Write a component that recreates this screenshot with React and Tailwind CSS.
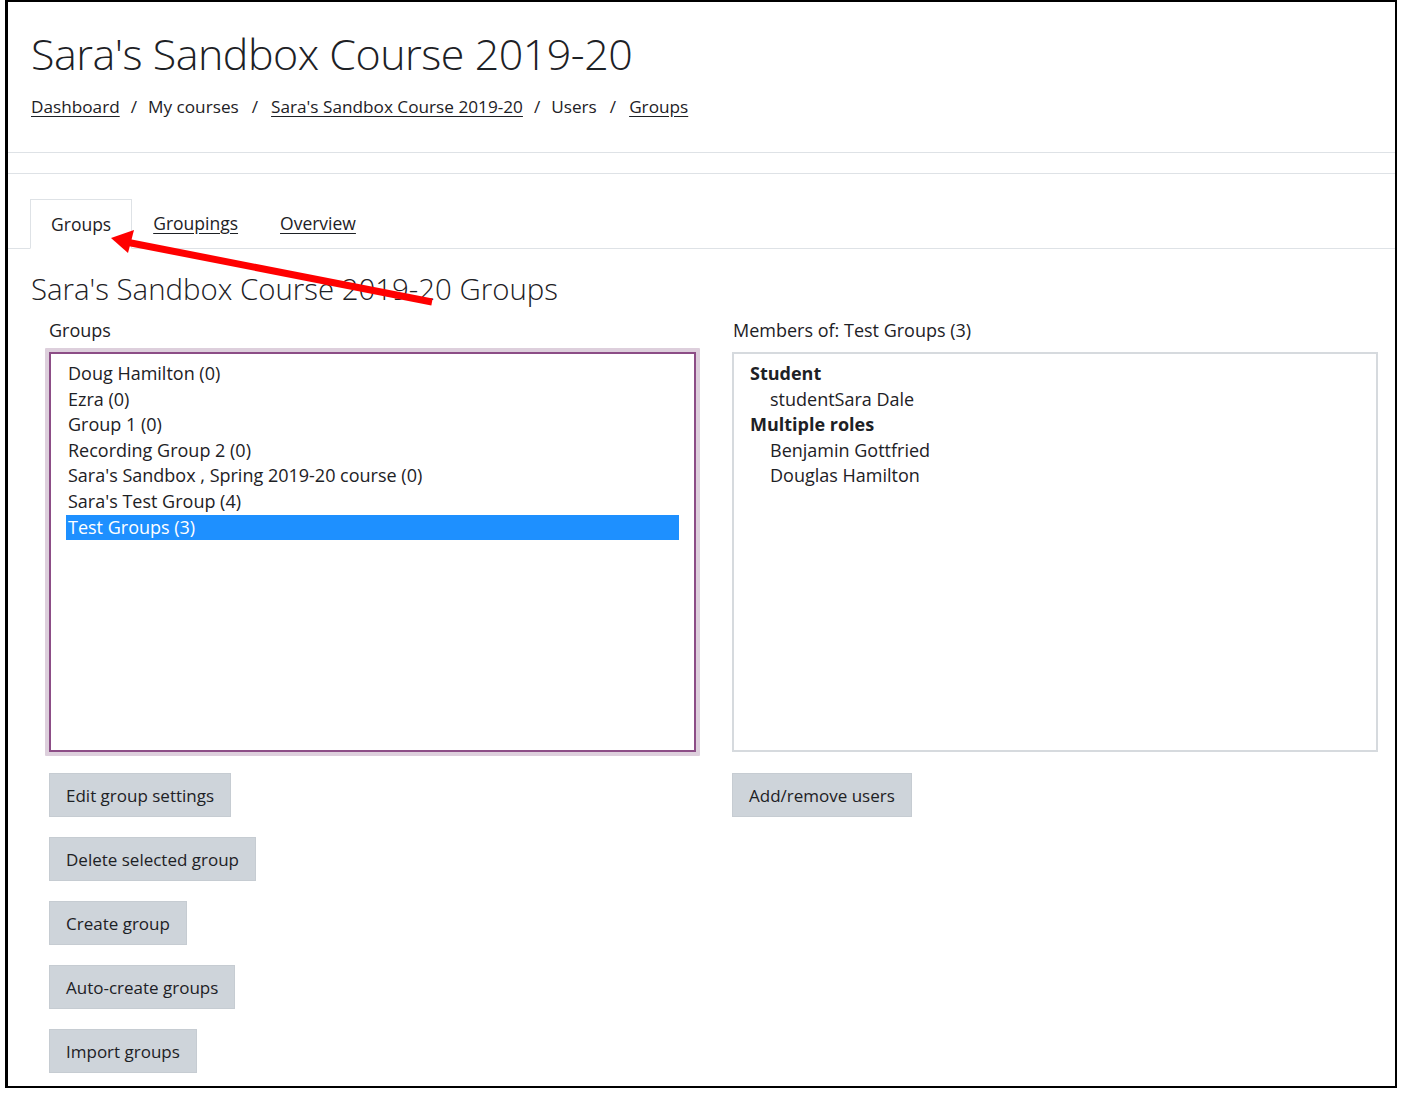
const groups = [
  'Doug Hamilton (0)',
  'Ezra (0)',
  'Group 1 (0)',
  'Recording Group 2 (0)',
  "Sara's Sandbox , Spring 2019-20 course (0)",
  "Sara's Test Group (4)",
  'Test Groups (3)'
];

const leftButtons = [
  'Edit group settings',
  'Delete selected group',
  'Create group',
  'Auto-create groups',
  'Import groups'
];

function Btn({ children }) {
  return (
    <button className="h-[44px] px-[16px] bg-[#ced4da] border border-[#c6ccd2] text-[17px] text-[#1d2125] leading-none self-start">
      {children}
    </button>
  );
}

function Crumb({ children, link }) {
  return link ? (
    <a className="underline underline-offset-[3px] text-[#1d2125]">{children}</a>
  ) : (
    <span>{children}</span>
  );
}

export default function App() {
  return (
    <div
      className="relative w-[1404px] h-[1093px] bg-white text-[#1d2125]"
      style={{ fontFamily: '"Open Sans", "Noto Sans", sans-serif' }}
    >
      <div className="ml-[5px] w-[1392px] h-[1088px] border-2 border-l-[3px] border-black flex flex-col">
        {/* Header */}
        <div className="pl-[23px] pt-[22px] h-[151px] border-b border-[#dee2e6]">
          <h1 className="text-[43px] font-light leading-[60px] tracking-[-0.5px]">
            Sara's Sandbox Course 2019-20
          </h1>
          <nav className="mt-[10px] flex items-center text-[17.2px] leading-[26px]">
            <Crumb link>Dashboard</Crumb>
            <span className="mx-[11px]">/</span>
            <Crumb>My courses</Crumb>
            <span className="mx-[13px]">/</span>
            <Crumb link>Sara's Sandbox Course 2019-20</Crumb>
            <span className="mx-[11px]">/</span>
            <Crumb>Users</Crumb>
            <span className="mx-[13px]">/</span>
            <Crumb link>Groups</Crumb>
          </nav>
        </div>
        <div className="h-[21px] border-b border-[#dee2e6]" />

        {/* Tabs */}
        <div className="mt-[25px] flex items-end border-b border-[#dee2e6] pl-[22px] h-[50px]">
          <div className="h-[50px] -mb-px px-[20px] flex items-center border border-b-white border-[#dee2e6] bg-white text-[17.5px]">
            Groups
          </div>
          <a className="h-[50px] px-[21px] flex items-center text-[17.5px] underline underline-offset-[3px]">
            Groupings
          </a>
          <a className="h-[50px] px-[21px] flex items-center text-[17.5px] underline underline-offset-[3px]">
            Overview
          </a>
        </div>

        {/* Content */}
        <div className="pl-[23px] pr-[18px]">
          <h2 className="mt-[18px] text-[29.4px] font-light leading-[44px]">
            Sara's Sandbox Course 2019-20 Groups
          </h2>
          <div className="mt-[6px] flex gap-[34px]">
            <div className="w-[654px] flex flex-col">
              <div className="pl-[18px] text-[18px] leading-[26px]">Groups</div>
              <div className="mt-[5px] ml-[14px] w-[655px] h-[408px] p-[4px] bg-[#ddcfdc] rounded-[1px]">
                <div className="h-full bg-white border-2 border-[#8c4d86] pt-[7px] pl-[15px] pr-[15px]">
                  {groups.map((g, i) => (
                    <div
                      key={g}
                      className={
                        'h-[25.6px] leading-[25.6px] text-[18px] pl-[2px] ' +
                        (i === groups.length - 1 ? 'bg-[#1e90ff] text-white' : '')
                      }
                    >
                      {g}
                    </div>
                  ))}
                </div>
              </div>
              <div className="mt-[17px] ml-[18px] flex flex-col gap-[20px]">
                {leftButtons.map((b) => (
                  <Btn key={b}>{b}</Btn>
                ))}
              </div>
            </div>
            <div className="flex-1 flex flex-col">
              <div className="text-[18px] leading-[26px] pl-[14px]">Members of: Test Groups (3)</div>
              <div className="mt-[9px] ml-[13px] w-[646px] h-[400px] border-2 border-[#d6dade] pt-[7px] pl-[16px] text-[18px] leading-[25.6px]">
                <div className="font-bold">Student</div>
                <div className="pl-[20px]">studentSara Dale</div>
                <div className="font-bold">Multiple roles</div>
                <div className="pl-[20px]">Benjamin Gottfried</div>
                <div className="pl-[20px]">Douglas Hamilton</div>
              </div>
              <div className="mt-[21px] ml-[13px] flex flex-col">
                <Btn>Add/remove users</Btn>
              </div>
            </div>
          </div>
        </div>
      </div>

      {/* Annotation arrow */}
      <svg className="absolute inset-0 pointer-events-none" width="1404" height="1093">
        <line x1="432" y1="302" x2="126" y2="242" stroke="#ff0000" strokeWidth="7" />
        <polygon points="111,238 134,230 128,253" fill="#ff0000" />
      </svg>
    </div>
  );
}
